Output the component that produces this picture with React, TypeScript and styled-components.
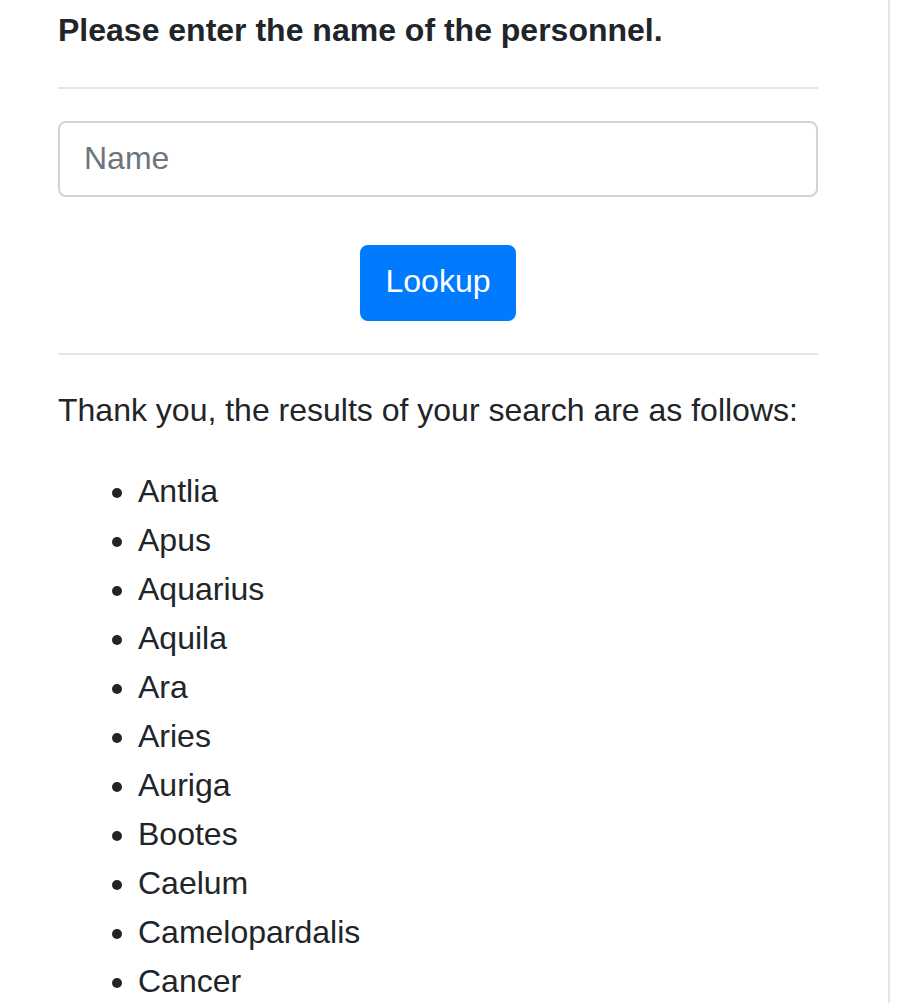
import React from "react";
import styled, { createGlobalStyle } from "styled-components";

const Global = createGlobalStyle`
  html, body { margin: 0; padding: 0; background: #fff; }
  body {
    font-family: "Liberation Sans", Arial, Helvetica, sans-serif;
    font-size: 32px;
    line-height: 49px;
    color: #212529;
    overflow: hidden;
  }
  * { box-sizing: border-box; }
`;

const Page = styled.div`
  display: flex;
  height: 1003px;
  overflow: hidden;
`;

const Column = styled.main`
  width: 890px;
  padding: 6px 70px 0 58px;
  border-right: 2px solid #e6e6e6;
  display: flex;
  flex-direction: column;
`;

const Heading = styled.p`
  margin: 0;
  font-weight: 700;
`;

const Rule = styled.hr<{ $after?: number }>`
  margin: 32px 0 ${(p) => p.$after ?? 32}px;
  border: 0;
  border-top: 2px solid rgba(0, 0, 0, 0.1);
  height: 0;
`;

const Form = styled.form`
  display: flex;
  flex-direction: column;
  align-items: center;
  gap: 48px;
`;

const Input = styled.input`
  width: 100%;
  height: 76px;
  padding: 11px 24px 13px;
  font-family: inherit;
  font-size: 32px;
  line-height: 48px;
  color: #495057;
  background: #fff;
  border: 2px solid #ced4da;
  border-radius: 8px;
  outline: none;
  &::placeholder { color: #6c757d; opacity: 1; }
`;

const Button = styled.button`
  height: 76px;
  padding: 10px 24px 14px;
  font-family: inherit;
  font-size: 32px;
  line-height: 48px;
  color: #fff;
  background: #007bff;
  border: 2px solid #007bff;
  border-radius: 8px;
  cursor: pointer;
`;

const Message = styled.p`
  margin: 0 0 32px;
`;

const Results = styled.ul`
  margin: 0;
  padding-left: 80px;
  list-style: disc;
`;

const Item = styled.li``;

const names = [
  "Antlia",
  "Apus",
  "Aquarius",
  "Aquila",
  "Ara",
  "Aries",
  "Auriga",
  "Bootes",
  "Caelum",
  "Camelopardalis",
  "Cancer",
];

export default function App() {
  return (
    <>
      <Global />
      <Page>
        <Column>
          <Heading>Please enter the name of the personnel.</Heading>
          <Rule />
          <Form onSubmit={(e) => e.preventDefault()}>
            <Input type="text" placeholder="Name" />
            <Button type="submit">Lookup</Button>
          </Form>
          <Rule $after={31} />
          <Message>Thank you, the results of your search are as follows:</Message>
          <Results>
            {names.map((n) => (
              <Item key={n}>{n}</Item>
            ))}
          </Results>
        </Column>
      </Page>
    </>
  );
}
